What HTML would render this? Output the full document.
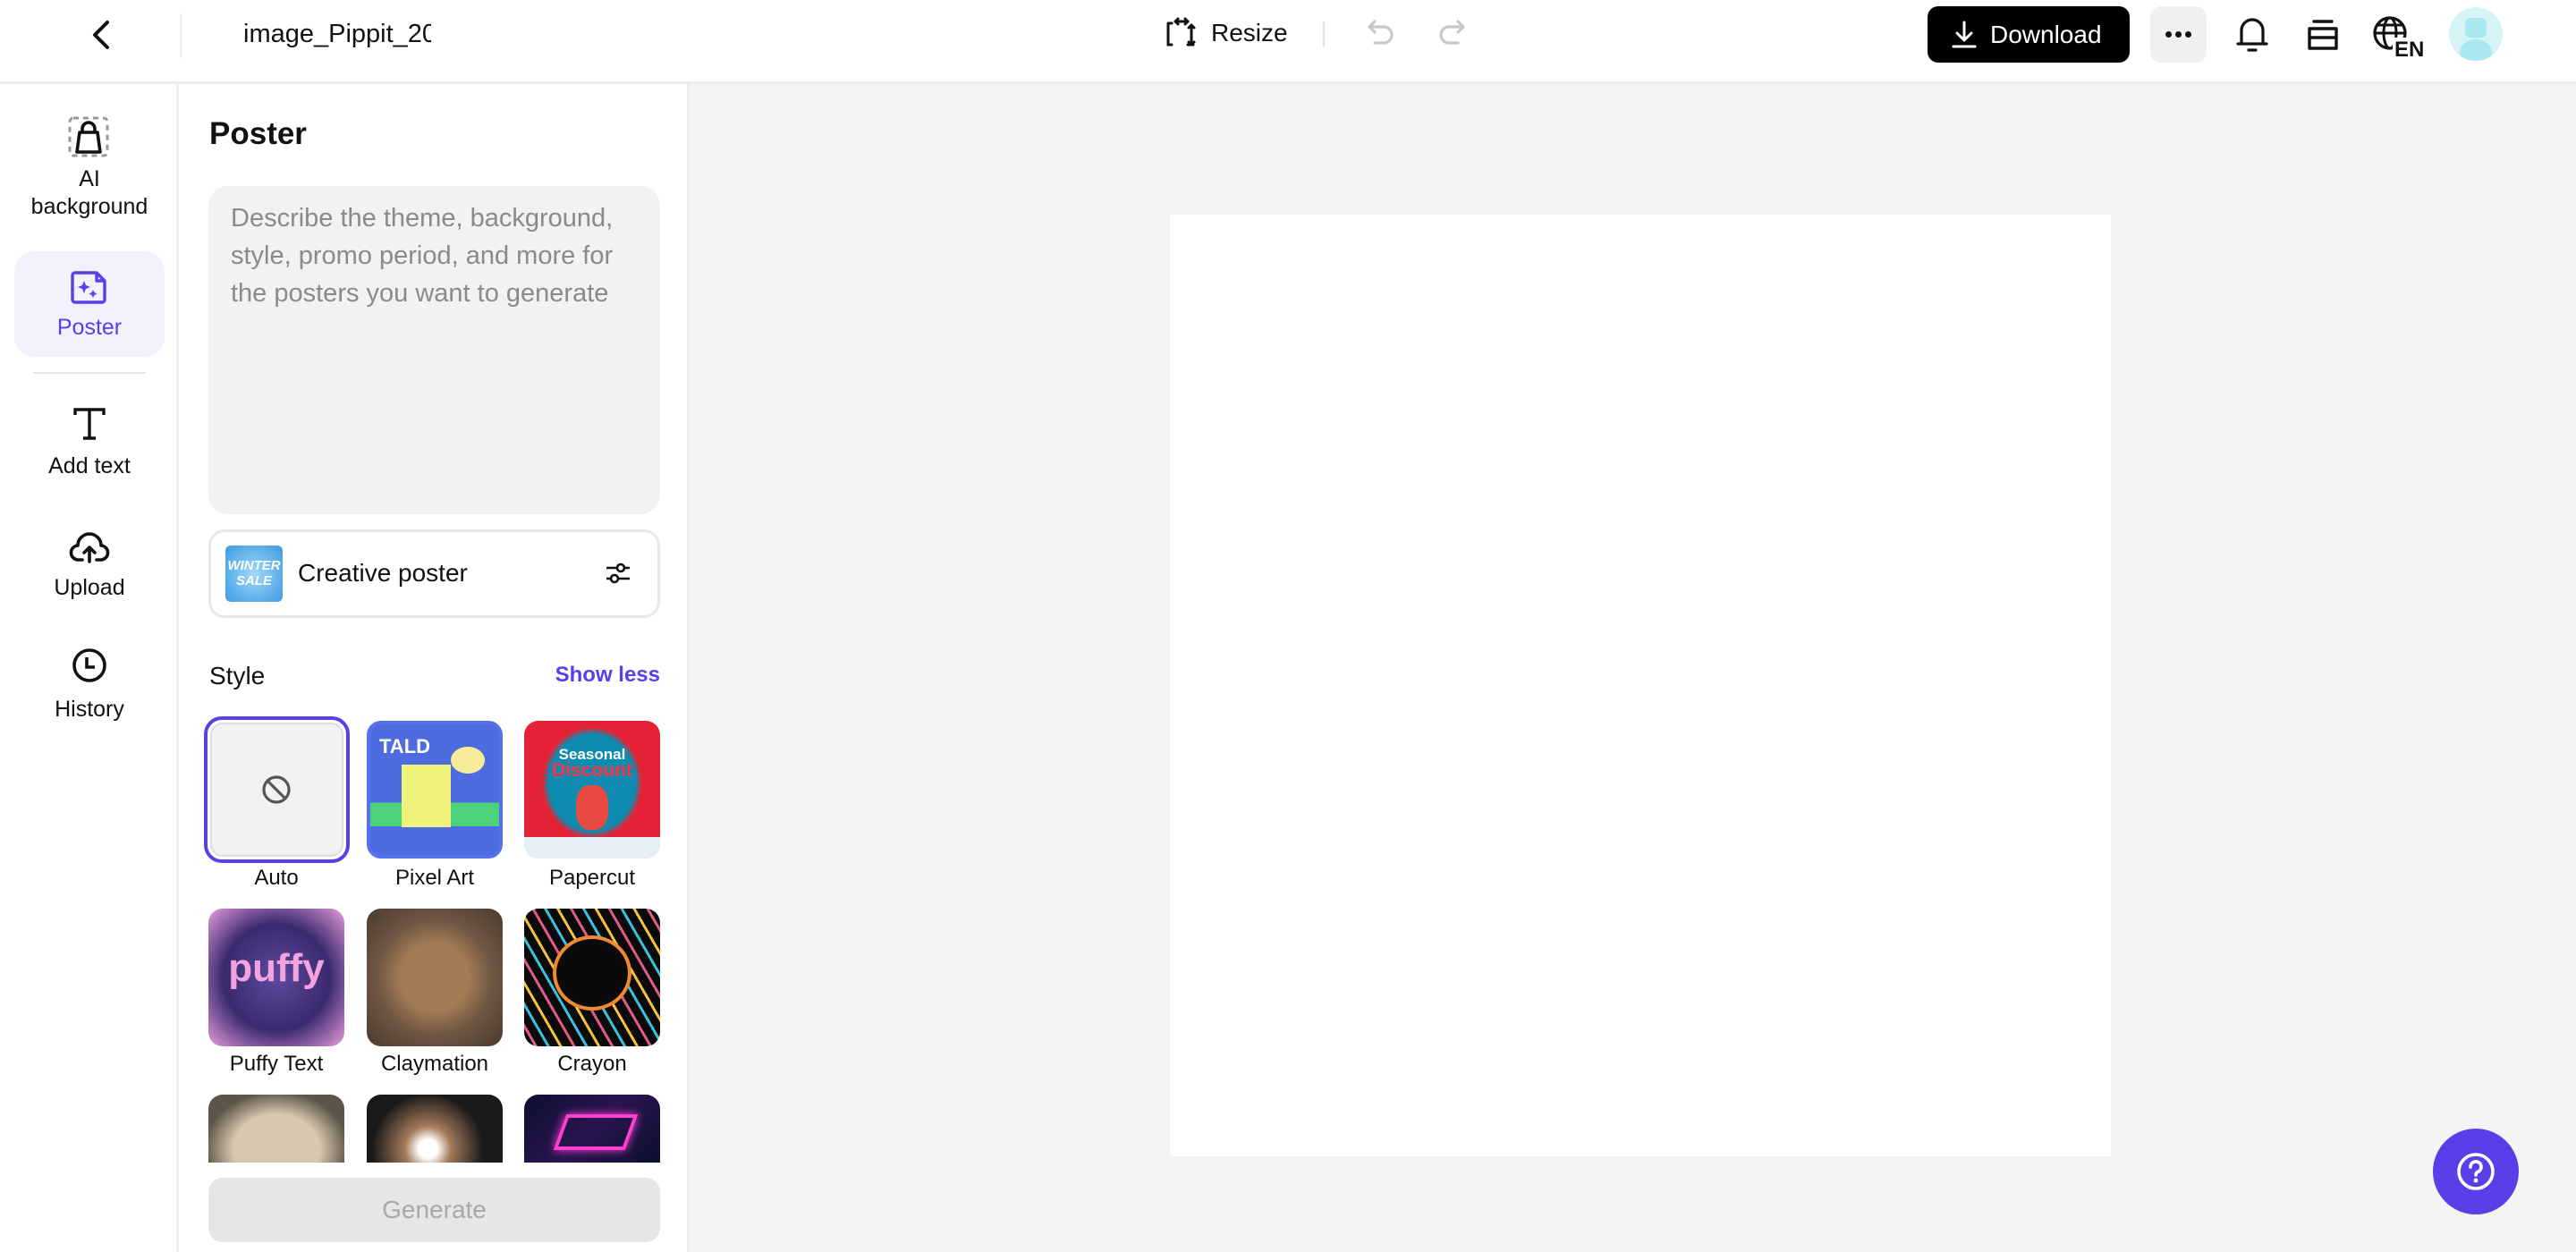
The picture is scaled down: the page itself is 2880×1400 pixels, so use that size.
<!DOCTYPE html>
<html><head><meta charset="utf-8">
<style>
*{box-sizing:border-box;margin:0;padding:0}
body{width:2880px;height:1400px;overflow:hidden;background:#fff;font-family:"Liberation Sans",sans-serif;color:#111;position:relative}
.abs{position:absolute}
.hdr{left:0;top:0;width:2880px;height:94px;border-bottom:3px solid #ececec;background:#fff}
.nav{left:0;top:94px;width:200px;height:1306px;border-right:3px solid #efefef}
.panel{left:200px;top:94px;width:571px;height:1306px;border-right:3px solid #ececec;background:#fff}
.main{left:771px;top:94px;width:2109px;height:1306px;background:#f4f4f4}
.navlbl{position:absolute;width:200px;text-align:center;font-size:25px;color:#111;line-height:31px}
.tile{position:absolute;width:152px;height:154px;border-radius:16px;overflow:hidden}
.lbl{position:absolute;width:152px;text-align:center;font-size:24px;color:#111}
svg{position:absolute;overflow:visible}
</style></head><body>
<div class="abs hdr"></div>
<svg style="left:100px;top:22px" width="26" height="34" viewBox="0 0 26 34"><path d="M20 3 L6 17 L20 31" fill="none" stroke="#111" stroke-width="4" stroke-linecap="round" stroke-linejoin="round"/></svg>
<div class="abs" style="left:201px;top:15px;width:2px;height:50px;background:#ececec"></div>
<div class="abs" style="left:272px;top:22px;font-size:29px;width:210px;overflow:hidden;white-space:nowrap">image_Pippit_20</div>

<svg style="left:1302px;top:20px" width="36" height="36" viewBox="0 0 36 36"><path d="M4 6v24h4M4 6h4M30 8v22M26 30h6M12 4h14M12 4l3-3M12 4l3 3M26 4l-3-3M26 4l-3 3M30 8l-3 3M30 8l3 3M30 30l-3-3M30 30l3-3" fill="none" stroke="#111" stroke-width="3" stroke-linecap="round"/></svg>
<div class="abs" style="left:1354px;top:21px;font-size:28px">Resize</div>
<div class="abs" style="left:1479px;top:25px;width:2px;height:28px;background:#e3e3e3"></div>
<svg style="left:1527px;top:20px" width="34" height="36" viewBox="0 0 34 36"><path d="M10 4 L4 10 L10 16 M4 10 H20 a9 9 0 0 1 0 18 H10" fill="none" stroke="#c8c8c8" stroke-width="3.2" stroke-linecap="round" stroke-linejoin="round"/></svg>
<svg style="left:1606px;top:20px" width="34" height="36" viewBox="0 0 34 36"><path d="M24 4 L30 10 L24 16 M30 10 H14 a9 9 0 0 0 0 18 H24" fill="none" stroke="#c8c8c8" stroke-width="3.2" stroke-linecap="round" stroke-linejoin="round"/></svg>

<div class="abs" style="left:2155px;top:7px;width:226px;height:63px;background:#000;border-radius:12px;color:#fff;font-size:28px;line-height:63px;padding-left:70px">Download</div>
<svg style="left:2181px;top:23px" width="30" height="32" viewBox="0 0 30 32"><path d="M15 2v20M7 14l8 8 8-8M3 29h24" fill="none" stroke="#fff" stroke-width="3" stroke-linecap="round" stroke-linejoin="round"/></svg>
<div class="abs" style="left:2404px;top:7px;width:63px;height:63px;background:#f0f0f0;border-radius:12px"></div>
<div class="abs" style="left:2421px;top:35px;width:7px;height:7px;border-radius:50%;background:#111;box-shadow:11px 0 #111,22px 0 #111"></div>
<svg style="left:2498px;top:16px" width="40" height="44" viewBox="0 0 40 44"><path d="M8 32V18a12 12 0 0 1 24 0v14M4 33h32M16 40h8" fill="none" stroke="#111" stroke-width="3.2" stroke-linecap="round"/></svg>
<svg style="left:2577px;top:20px" width="40" height="38" viewBox="0 0 40 38"><path d="M10 4h20M5 12h30M5 12v22h30V12M5 22h30" fill="none" stroke="#111" stroke-width="3.4" stroke-linecap="round" stroke-linejoin="round"/></svg>
<svg style="left:2652px;top:16px" width="50" height="48" viewBox="0 0 50 48"><circle cx="20" cy="21" r="17" fill="none" stroke="#111" stroke-width="3.2"/><ellipse cx="20" cy="21" rx="7" ry="17" fill="none" stroke="#111" stroke-width="3"/><path d="M3 21h34M6 12h28" stroke="#111" stroke-width="3"/><rect x="23" y="26" width="28" height="22" fill="#fff"/><text x="25" y="47" font-family="Liberation Sans" font-size="24" font-weight="bold" fill="#111">EN</text></svg>
<div class="abs" style="left:2738px;top:8px;width:60px;height:60px;border-radius:50%;background:#d6f3f6;overflow:hidden"><div class="abs" style="left:18px;top:12px;width:24px;height:22px;border-radius:6px;background:#a9e8ef"></div><div class="abs" style="left:12px;top:36px;width:36px;height:30px;border-radius:50%;background:#a9e8ef"></div></div>

<div class="abs nav"></div>
<svg style="left:76px;top:130px" width="46" height="46" viewBox="0 0 46 46"><rect x="2" y="2" width="42" height="42" rx="4" fill="none" stroke="#999" stroke-width="3" stroke-dasharray="6 5"/><path d="M10 40l3-22h20l3 22z M16 18v-4a7 7 0 0 1 14 0v4" fill="none" stroke="#111" stroke-width="3.6" stroke-linejoin="round"/></svg>
<div class="navlbl" style="top:185px">AI<br>background</div>
<div class="abs" style="left:16px;top:281px;width:168px;height:118px;border-radius:22px;background:#f3f1fe"></div>
<svg style="left:80px;top:302px" width="40" height="38" viewBox="0 0 40 38"><path d="M4 3h24l9 9v21a3 3 0 0 1-3 3H4a3 3 0 0 1-3-3V6a3 3 0 0 1 3-3z M28 3v9h9" fill="none" stroke="#5b3ee8" stroke-width="3.4" stroke-linejoin="round"/><path d="M14 12l2 5 5 2-5 2-2 5-2-5-5-2 5-2z M24 22l1.5 3 3 1.5-3 1.5-1.5 3-1.5-3-3-1.5 3-1.5z" fill="#5b3ee8"/></svg>
<div class="navlbl" style="top:351px;color:#5b3ee8">Poster</div>
<div class="abs" style="left:37px;top:416px;width:126px;height:2px;background:#e3e3e3"></div>
<svg style="left:80px;top:454px" width="40" height="40" viewBox="0 0 40 40"><path d="M4 10V4h32v6M20 4v32M13 36h14" fill="none" stroke="#111" stroke-width="3.4"/></svg>
<div class="navlbl" style="top:506px">Add text</div>
<svg style="left:78px;top:590px" width="44" height="42" viewBox="0 0 44 42"><path d="M14 36H10a8 8 0 0 1-1-16 13 13 0 0 1 26 0 8 8 0 0 1-1 16h-4M22 38V22M16 28l6-6 6 6" fill="none" stroke="#111" stroke-width="3.6" stroke-linecap="round" stroke-linejoin="round"/></svg>
<div class="navlbl" style="top:642px">Upload</div>
<svg style="left:80px;top:724px" width="40" height="40" viewBox="0 0 40 40"><circle cx="20" cy="20" r="17" fill="none" stroke="#111" stroke-width="3.6"/><path d="M17 11v11h9" fill="none" stroke="#111" stroke-width="3.6"/></svg>
<div class="navlbl" style="top:778px">History</div>

<div class="abs panel"></div>
<div class="abs" style="left:234px;top:130px;font-size:35px;font-weight:bold">Poster</div>
<div class="abs" style="left:233px;top:208px;width:505px;height:367px;background:#f2f2f2;border-radius:22px;padding:15px 20px 15px 25px;font-size:29px;line-height:42px;color:#8a8a8a">Describe the theme, background, style, promo period, and more for the posters you want to generate</div>
<div class="abs" style="left:233px;top:592px;width:505px;height:99px;border:3px solid #e8e8e8;border-radius:18px"></div>
<div class="abs" style="left:252px;top:610px;width:64px;height:63px;border-radius:6px;background:radial-gradient(circle at 50% 50%,#9fd8fb,#3c9be0);color:#fff;font-size:15px;font-weight:bold;text-align:center;line-height:17px;padding-top:14px;font-style:italic">WINTER<br>SALE</div>
<div class="abs" style="left:333px;top:625px;font-size:28px">Creative poster</div>
<svg style="left:676px;top:627px" width="30" height="28" viewBox="0 0 30 28"><path d="M2 8h26M2 20h26" stroke="#111" stroke-width="2.6"/><circle cx="18" cy="8" r="4" fill="#fff" stroke="#111" stroke-width="2.6"/><circle cx="11" cy="20" r="4" fill="#fff" stroke="#111" stroke-width="2.6"/></svg>
<div class="abs" style="left:234px;top:740px;font-size:28px">Style</div>
<div class="abs" style="left:560px;top:741px;width:178px;text-align:right;font-size:24px;color:#5b3ee8;font-weight:bold">Show less</div>

<div class="abs" style="left:228px;top:801px;width:163px;height:164px;border:4px solid #5b3ee8;border-radius:20px;padding:3px"><div style="width:100%;height:100%;background:#f2f2f2;border:2px solid #ddd;border-radius:14px"></div></div>
<svg style="left:292px;top:866px" width="34" height="34" viewBox="0 0 34 34"><circle cx="17" cy="17" r="14" fill="none" stroke="#555" stroke-width="3.2"/><path d="M7 7l20 20" stroke="#555" stroke-width="3.2"/></svg>
<div class="lbl" style="left:233px;top:968px">Auto</div>
<div class="tile" style="left:410px;top:806px;background:linear-gradient(#4e6be0 0 60%,#4bd27a 60% 78%,#4e6be0 78%);border:4px solid #5572ea"><div class="abs" style="left:35px;top:45px;width:55px;height:70px;background:#eef27a"></div><div class="abs" style="left:90px;top:25px;width:38px;height:30px;border-radius:50%;background:#f7ec9a"></div><div class="abs" style="left:10px;top:12px;color:#fff;font-weight:bold;font-size:22px">TALD</div></div>
<div class="lbl" style="left:410px;top:968px">Pixel Art</div>
<div class="tile" style="left:586px;top:806px;background:radial-gradient(ellipse at 50% 45%,#0d8bb0 0 45%,#e52235 52% 88%,#e8f1f5 92%)"><div class="abs" style="left:0;top:28px;width:152px;text-align:center;color:#fff;font-weight:bold;font-size:17px">Seasonal</div><div class="abs" style="left:0;top:44px;width:152px;text-align:center;color:#ff3140;font-weight:bold;font-size:21px">Discount</div><div class="abs" style="left:58px;top:72px;width:36px;height:50px;border-radius:40%;background:#e84a42"></div><div class="abs" style="left:0;top:130px;width:152px;height:24px;background:#e4eef3"></div></div>
<div class="lbl" style="left:586px;top:968px">Papercut</div>

<div class="tile" style="left:233px;top:1016px;background:radial-gradient(circle at 50% 50%,#5d4a9e,#3a2a6e 55%,#d48fd0 95%)"><div class="abs" style="left:0;top:42px;width:152px;text-align:center;color:#f3a3e0;font-weight:bold;font-size:44px">puffy</div></div>
<div class="lbl" style="left:233px;top:1176px">Puffy Text</div>
<div class="tile" style="left:410px;top:1016px;background:radial-gradient(circle at 50% 50%,#a37b55 0 35%,#6e5643 60%,#4a3a2e)"></div>
<div class="lbl" style="left:410px;top:1176px">Claymation</div>
<div class="tile" style="left:586px;top:1016px;background:repeating-linear-gradient(60deg,#0a0a0a 0 10px,#e05a8a 10px 13px,#0a0a0a 13px 22px,#3ac0e0 22px 25px,#0a0a0a 25px 34px,#f5c23a 34px 37px)"><div class="abs" style="left:32px;top:30px;width:88px;height:84px;border:4px solid #f08a30;border-radius:50%;background:#0a0a0a"></div></div>
<div class="lbl" style="left:586px;top:1176px">Crayon</div>

<div class="tile" style="left:233px;top:1224px;height:76px;border-radius:16px 16px 0 0;background:radial-gradient(ellipse at 50% 80%,#d9c7ae 0 45%,#5b5648 75%)"></div>
<div class="tile" style="left:410px;top:1224px;height:76px;border-radius:16px 16px 0 0;background:radial-gradient(circle at 45% 80%,#fff 0 10%,#a47a5a 25%,#1a1a1a 60%)"></div>
<div class="tile" style="left:586px;top:1224px;height:76px;border-radius:16px 16px 0 0;background:linear-gradient(135deg,#0b1030,#2a1450 50%,#0b1030)"><div class="abs" style="left:40px;top:22px;width:80px;height:40px;border:4px solid #ff3fd0;transform:skewX(-20deg);box-shadow:0 0 10px #ff3fd0"></div></div>
<div class="abs" style="left:200px;top:1300px;width:568px;height:100px;background:#fff"></div>
<div class="abs" style="left:233px;top:1317px;width:505px;height:72px;border-radius:16px;background:#e6e6e6;color:#a8a8a8;font-size:28px;text-align:center;line-height:72px">Generate</div>

<div class="abs main"></div>
<div class="abs" style="left:1308px;top:240px;width:1052px;height:1053px;background:#fff"></div>
<div class="abs" style="left:2720px;top:1262px;width:96px;height:96px;border-radius:50%;background:#5b3ee8"></div>
<svg style="left:2744px;top:1286px" width="48" height="48" viewBox="0 0 48 48"><circle cx="24" cy="24" r="19" fill="none" stroke="#fff" stroke-width="3.6"/><path d="M18 19a6 6 0 1 1 8 5.5c-1.5.7-2 1.7-2 3.5" fill="none" stroke="#fff" stroke-width="3.6" stroke-linecap="round"/><circle cx="24" cy="34" r="2.4" fill="#fff"/></svg>
</body></html>
